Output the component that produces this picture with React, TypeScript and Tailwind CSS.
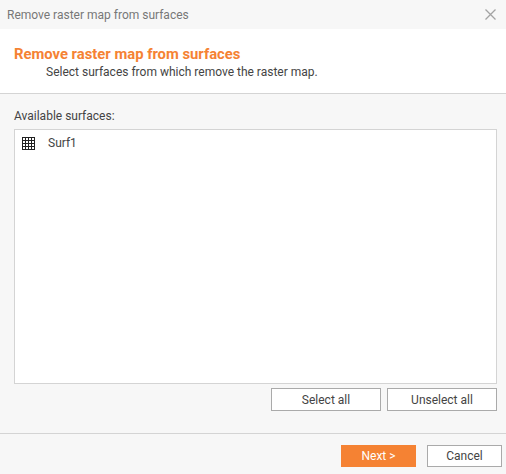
const GridIcon = () => (
  <svg width="13" height="13" viewBox="0 0 13 13" className="shrink-0 mt-[1px]" shapeRendering="crispEdges">
    <path d="M0.5 0V13M3.5 0V13M6.5 0V13M9.5 0V13M12.5 0V13M0 0.5H13M0 3.5H13M0 6.5H13M0 9.5H13M0 12.5H13" stroke="#222" strokeWidth="1" fill="none" />
  </svg>
);

const CloseIcon = () => (
  <svg width="11" height="11" viewBox="0 0 11 11">
    <path d="M0.5 0.5L10.5 10.5M10.5 0.5L0.5 10.5" stroke="#a3a3a3" strokeWidth="1.3" fill="none" />
  </svg>
);

const OutlineButton = ({ label, className }: { label: string; className: string }) => (
  <button className={`bg-white border border-[#aaaaaa] text-[12px] text-[#444444] ${className}`}>
    {label}
  </button>
);

export default function App() {
  return (
    <div className="w-[506px] h-[474px] flex flex-col bg-[#f7f7f7] font-['Roboto',sans-serif] overflow-hidden">
      <div className="h-[29px] shrink-0 flex items-center justify-between pl-[7px] pr-[10px] text-[12px] text-[#777777]">
        <span>Remove raster map from surfaces</span>
        <CloseIcon />
      </div>

      <div className="h-[65px] shrink-0 bg-white border-b border-[#d4d4d4] pl-[14px] pt-[16px]">
        <div className="text-[14.8px] leading-[18px] font-bold text-[#f58233]">Remove raster map from surfaces</div>
        <div className="text-[12px] leading-[18px] pl-[32px] text-[#444444]">Select surfaces from which remove the raster map.</div>
      </div>

      <div className="flex-1 flex flex-col pl-[14px] pr-[9px] pt-[14px]">
        <div className="text-[12px] leading-[16px] text-[#444444] mb-[5px]">Available surfaces:</div>
        <div className="h-[255px] bg-white border border-[#d4d4d4] pl-[7px] pt-[6px]">
          <div className="flex items-center gap-[13px] text-[12px] leading-[14px] text-[#444444]">
            <GridIcon />
            <span>Surf1</span>
          </div>
        </div>
        <div className="flex justify-end gap-[6px] mt-[4px]">
          <OutlineButton label="Select all" className="w-[110px] h-[23px]" />
          <OutlineButton label="Unselect all" className="w-[110px] h-[23px]" />
        </div>
      </div>

      <div className="h-[41px] shrink-0 border-t border-[#d4d4d4] flex justify-end gap-[11px] pt-[11px] pr-[4px]">
        <button className="w-[75px] h-[22px] bg-[#f58233] text-[12px] text-white">Next &gt;</button>
        <OutlineButton label="Cancel" className="w-[75px] h-[22px]" />
      </div>
    </div>
  );
}
